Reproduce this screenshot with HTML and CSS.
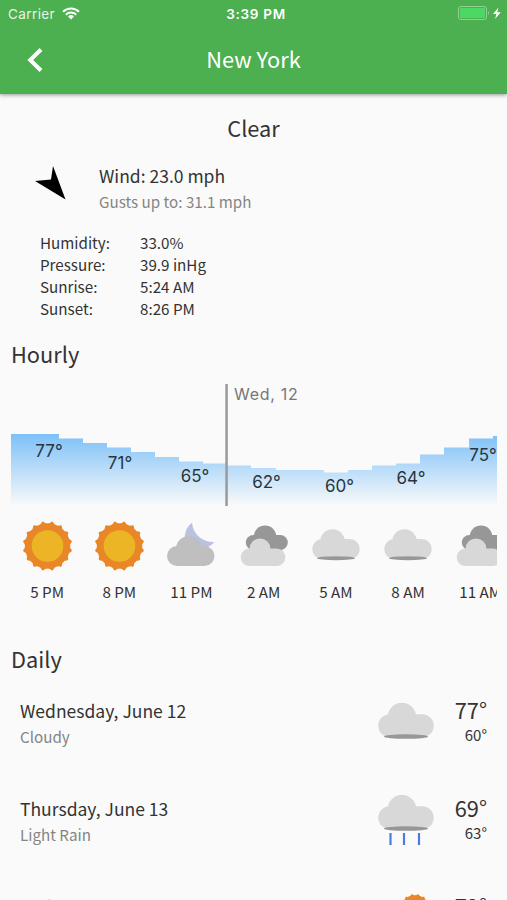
FILE: index.html
```html
<!DOCTYPE html>
<html lang="en">
<head>
  <meta charset="UTF-8">
  <meta name="viewport" content="width=device-width, initial-scale=1.0">
  <title>Weather</title>
  <link rel="stylesheet" href="styles.css">
</head>
<body>
  <svg class="defs" width="0" height="0">
    <symbol id="sun" viewBox="0 0 50 50">
      <g fill="#e98628">
        <rect x="7.500" y="7.500" width="35" height="35" rx="1" transform="rotate(11.25 25 25)"/>
        <rect x="7.500" y="7.500" width="35" height="35" rx="1" transform="rotate(33.75 25 25)"/>
        <rect x="7.500" y="7.500" width="35" height="35" rx="1" transform="rotate(56.25 25 25)"/>
        <rect x="7.500" y="7.500" width="35" height="35" rx="1" transform="rotate(78.75 25 25)"/>
        <circle cx="25" cy="25" r="22.300"/>
      </g>
      <circle cx="25" cy="25" r="15.500" fill="#ecb525"/>
    </symbol>
    <symbol id="cloudy" viewBox="0 0 48 32">
      <g fill="#d8d8d8">
        <circle cx="20.500" cy="12.500" r="12.200"/>
        <rect x="0.200" y="10" width="47.600" height="19.800" rx="9.900"/>
      </g>
      <ellipse cx="24" cy="29.200" rx="19" ry="2" fill="#979797"/>
    </symbol>
    <symbol id="overcast" viewBox="0 0 48 42">
      <g fill="#979797">
        <circle cx="25" cy="11.800" r="11.300"/>
        <rect x="5.800" y="10" width="42" height="15" rx="7.500"/>
      </g>
      <g fill="#d8d8d8">
        <circle cx="20" cy="24" r="10.500"/>
        <rect x="0.800" y="23.500" width="44.500" height="17.500" rx="8.700"/>
      </g>
    </symbol>
    <symbol id="night" viewBox="0 0 48 44">
      <path fill="#b8c3e2" d="M25 0.500 A21 21 0 0 0 47.500 20 A19 19 0 0 1 38 26 L18 18 A19 19 0 0 1 25 0.500 Z"/>
      <g fill="#bfbfbf">
        <circle cx="22" cy="27" r="13"/>
        <rect x="0" y="24" width="47.500" height="20" rx="10"/>
      </g>
    </symbol>
  </svg>

  <header class="app-bar">
    <div class="status">
      <div class="carrier">Carrier
        <svg width="18" height="13" viewBox="0 0 18 13" fill="none" stroke="#fff" stroke-width="2">
          <path d="M1 4.800 A11.500 11.500 0 0 1 17 4.800"/>
          <path d="M3.800 7.700 A7.500 7.500 0 0 1 14.200 7.700"/>
          <path d="M9 12.500 L6 9.500 A4.300 4.300 0 0 1 12 9.500 Z" fill="#fff" stroke="none"/>
        </svg>
      </div>
      <div class="clock">3:39 PM</div>
      <div class="battery">
        <svg width="44" height="15" viewBox="0 0 44 15">
          <rect x="0.500" y="0.500" width="28" height="13" rx="2.500" fill="none" stroke="#94cf97"/>
          <rect x="2" y="2" width="25" height="10" rx="1" fill="#4bd964"/>
          <path d="M30 5 Q32 7 30 9 Z" fill="#94cf97"/>
          <path d="M40.500 1.500 L35 8 H38.500 L37 13 L42.800 6.300 H39.200 Z" fill="#fff"/>
        </svg>
      </div>
    </div>
    <div class="toolbar">
      <svg class="back" width="16" height="26" viewBox="0 0 16 26">
        <path d="M14 2.500 L3.200 13 L14 23.500" fill="none" stroke="#fff" stroke-width="4"/>
      </svg>
      <h1>New York</h1>
    </div>
  </header>

  <main>
    <h2 class="condition">Clear</h2>
    <section class="wind">
      <svg width="32" height="34" viewBox="0 0 32 34"><path d="M0 15 L16 13.500 L18 0 L30.500 33.500 Z"/></svg>
      <div>
        <div class="title">Wind: 23.0 mph</div>
        <div class="sub">Gusts up to: 31.1 mph</div>
      </div>
    </section>
    <dl class="details">
      <dt>Humidity:</dt><dd>33.0%</dd>
      <dt>Pressure:</dt><dd>39.9 inHg</dd>
      <dt>Sunrise:</dt><dd>5:24 AM</dd>
      <dt>Sunset:</dt><dd>8:26 PM</dd>
    </dl>

    <h2 class="section-title">Hourly</h2>
    <section class="hourly">
      <svg class="chart" width="486" height="122" viewBox="0 0 486 122">
        <defs>
          <linearGradient id="sky" gradientUnits="userSpaceOnUse" x1="0" y1="50" x2="0" y2="122">
            <stop offset="0" stop-color="#7dc0f8"/>
            <stop offset="1" stop-color="#fafafa"/>
          </linearGradient>
        </defs>
        <path fill="url(#sky)" d="M0 50 H48 V54.500 H72 V59 H96 V63.500 H120 V68 H144 V73 H168 V77.500 H192 V79.500 H216 V81.500 H240 V84 H265 V86 H313 V88.500 H337 V86 H361 V81.500 H385 V79.500 H409 V70.500 H433 V63.500 H458 V54.500 H482 V52 H486 V122 H0 Z"/>
        <rect x="214.300" y="0" width="2.500" height="122" fill="#9a9a9a"/>
        <g class="temps" text-anchor="middle">
          <text x="38" y="73">77°</text>
          <text x="109" y="85">71°</text>
          <text x="184" y="97.500">65°</text>
          <text x="255.500" y="103.500">62°</text>
          <text x="328.500" y="107.500">60°</text>
          <text x="400" y="99.500">64°</text>
          <text x="472" y="77">75°</text>
        </g>
        <text class="day" x="223" y="16">Wed, 12</text>
      </svg>
      <div class="hours">
        <div class="hour"><svg class="i-sun"><use href="#sun"/></svg><span>5 PM</span></div>
        <div class="hour"><svg class="i-sun"><use href="#sun"/></svg><span>8 PM</span></div>
        <div class="hour"><svg class="i-night"><use href="#night"/></svg><span>11 PM</span></div>
        <div class="hour"><svg class="i-overcast"><use href="#overcast"/></svg><span>2 AM</span></div>
        <div class="hour"><svg class="i-cloudy"><use href="#cloudy"/></svg><span>5 AM</span></div>
        <div class="hour"><svg class="i-cloudy"><use href="#cloudy"/></svg><span>8 AM</span></div>
        <div class="hour"><svg class="i-overcast"><use href="#overcast"/></svg><span>11 AM</span></div>
      </div>
    </section>

    <h2 class="section-title">Daily</h2>
    <section class="daily">
      <div class="day-row">
        <div class="info"><div class="title">Wednesday, June 12</div><div class="sub">Cloudy</div></div>
        <svg width="56" height="52" viewBox="0 0 56 52"><use href="#cloudy" y="5.500" width="56" height="37.300"/></svg>
        <div class="range"><div class="high">77°</div><div class="low">60°</div></div>
      </div>
      <div class="day-row">
        <div class="info"><div class="title">Thursday, June 13</div><div class="sub">Light Rain</div></div>
        <svg width="56" height="52" viewBox="0 0 56 52">
          <use href="#cloudy" y="-0.500" width="56" height="37.300"/>
          <path d="M12.500 38 V50 M26 38 V50 M41 38 V50" stroke="#4a7be0" stroke-width="2.200"/>
        </svg>
        <div class="range"><div class="high">69°</div><div class="low">63°</div></div>
      </div>
      <div class="day-row">
        <div class="info"><div class="title">Friday, June 14</div><div class="sub">Partly Cloudy</div></div>
        <svg width="56" height="52" viewBox="0 0 56 52"><use href="#sun" x="20" y="0.500" width="34" height="34"/></svg>
        <div class="range"><div class="high">79°</div><div class="low">62°</div></div>
      </div>
    </section>
  </main>
</body>
</html>
```

FILE: styles.css
```css
* {
  box-sizing: border-box;
}

body {
  margin: 0;
  height: 900px;
  overflow: hidden;
  background: #fafafa;
  color: #333;
  font-family: "Noto Sans CJK SC", sans-serif;
  font-size: 15.2px;
}

h1, h2, dl, dd {
  margin: 0;
  font-weight: 400;
}

svg {
  display: block;
}

.defs {
  position: absolute;
}

.app-bar {
  height: 94px;
  background: #4caf50;
  color: #fff;
  box-shadow: 0 1px 4px rgba(0, 0, 0, 0.4);
}

.status {
  display: grid;
  grid-template-columns: 1fr auto 1fr;
  align-items: center;
  height: 27px;
  padding: 0 5px 0 8px;
  font-family: Inter, sans-serif;
  font-size: 13.5px;
}

.carrier {
  display: flex;
  align-items: center;
  gap: 7px;
  color: #e6f5e6;
  letter-spacing: 0.4px;
}

.clock {
  margin-left: 2px;
  font-weight: 600;
  letter-spacing: 0.7px;
}

.battery {
  justify-self: end;
}

.toolbar {
  display: grid;
  grid-template-columns: 60px 1fr 60px;
  align-items: center;
  height: 66px;
}

.back {
  margin-left: 27px;
}

h1 {
  padding-bottom: 3px;
  text-align: center;
  font-size: 21.8px;
  line-height: 30px;
}

.condition {
  margin-top: 18px;
  font-size: 21.8px;
  line-height: 32px;
  text-align: center;
}

.wind {
  display: flex;
  align-items: center;
  gap: 32px;
  height: 50px;
  margin: 14px 0 0 35px;
}

.wind > div {
  padding-top: 9px;
}

.title {
  font-size: 17.5px;
  line-height: 26px;
}

.sub {
  font-size: 15.2px;
  line-height: 24px;
  color: #858585;
}

.details {
  display: grid;
  grid-template-columns: 100px 1fr;
  margin: 23px 0 0 40px;
  line-height: 22px;
}

.section-title {
  margin-left: 11px;
  font-size: 21.8px;
  line-height: 32px;
}

.details + .section-title {
  margin-top: 19px;
}

.hourly {
  margin: 14px 10px 0 11px;
  overflow: hidden;
}

.temps {
  font: 17px Inter, sans-serif;
  fill: #283540;
}

.day {
  font: 16px Inter, sans-serif;
  letter-spacing: 0.7px;
  fill: #777;
}

.hours {
  display: flex;
  width: 520px;
  margin-top: 14px;
}

.hour {
  display: flex;
  flex: 0 0 72.2px;
  flex-direction: column;
  align-items: center;
}

.i-sun {
  width: 51px;
  height: 52px;
}

.i-night {
  width: 48px;
  height: 44px;
  margin: 2px 0 6px;
}

.i-overcast {
  width: 48px;
  height: 42px;
  margin: 5px 0;
}

.i-cloudy {
  width: 48px;
  height: 32px;
  margin: 9px 0 11px;
}

.hour span {
  margin-top: 7px;
  line-height: 24px;
}

.hourly + .section-title {
  margin-top: 40px;
}

.daily {
  padding: 0 20px;
}

.day-row {
  display: flex;
  align-items: center;
  height: 98px;
}

.day-row:first-child {
  margin-top: -1px;
}

.info {
  flex: 1;
}

.range {
  width: 53px;
  padding-bottom: 4px;
  text-align: right;
}

.high {
  font-size: 21.8px;
  line-height: 28px;
}

.low {
  font-size: 15px;
  line-height: 22px;
}
```
